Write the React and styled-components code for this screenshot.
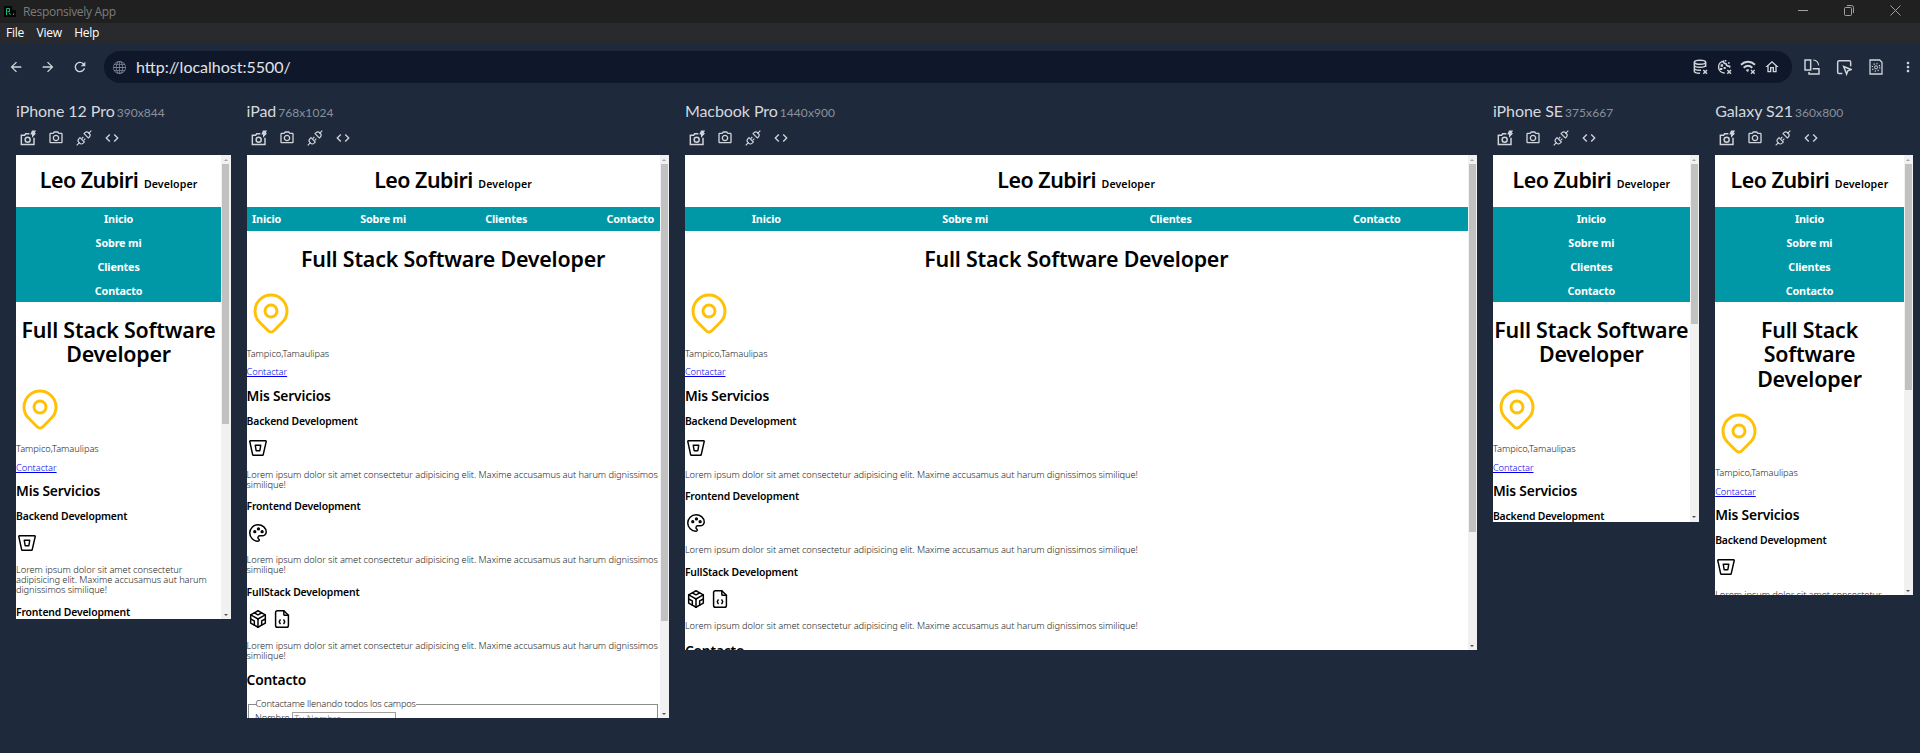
import React from 'react';
import styled, { createGlobalStyle } from 'styled-components';
import { TbBrandBitbucket, TbPalette, TbBrandCodesandbox, TbFileCode, TbMapPin } from 'react-icons/tb';
import { MdOutlinePhotoCamera, MdCode, MdArrowBack, MdArrowForward, MdRefresh, MdOutlineHome, MdMoreVert } from 'react-icons/md';
import { BsGlobe } from 'react-icons/bs';

const GlobalStyle = createGlobalStyle`
  * { box-sizing: border-box; }
  body { margin: 0; background: #1e293b; overflow: hidden; }
  h1, h2, h3, p, fieldset { margin: 0; padding: 0; }
`;

/* ---------- application shell ---------- */

const Window = styled.div`
  display: flex;
  flex-direction: column;
  height: 753px;
  overflow: hidden;
  background: #1e293b;
  color: #d5d8dd;
  font-family: Lato, sans-serif;
`;

const TitleBar = styled.header`
  display: flex;
  align-items: center;
  flex: none;
  height: 23px;
  padding: 0 19px 0 4px;
  background: #202020;
  color: #7c7c7c;
`;

const AppName = styled.span`
  flex: 1;
  margin-left: 7px;
  padding-top: 1px;
  font: 12px/18px "Open Sans", sans-serif;
  letter-spacing: -0.3px;
`;

const WindowControls = styled.div`
  display: flex;
  gap: 35px;
  padding-bottom: 3px;
  svg { display: block; }
`;

const MenuBar = styled.nav`
  display: flex;
  flex: none;
  gap: 12.5px;
  height: 20px;
  padding-left: 6px;
  background: #292a2d;
  color: #fff;
  font: 12px/20px "Open Sans", sans-serif;
  letter-spacing: -0.25px;
`;

const Toolbar = styled.div`
  display: flex;
  align-items: center;
  flex: none;
  height: 48px;
  padding: 0 4px 0 8px;
`;

const NavButtons = styled.div`
  display: flex;
  gap: 16px;
  padding-right: 16px;
`;

const IconButton = styled.span`
  display: flex;
  align-items: center;
  justify-content: center;
  width: 16px;
  height: 16px;
  color: #d1d5db;
`;

const AddressBar = styled.div`
  display: flex;
  align-items: center;
  flex: 1;
  height: 32px;
  padding: 0 12px 0 9px;
  border-radius: 16px;
  background: #0f172a;
`;

const Url = styled.span`
  flex: 1;
  margin-left: 10px;
  color: #e0e3e7;
  font-size: 16px;
  line-height: 24px;
`;

const AddressActions = styled.div`
  display: flex;
  gap: 8px;
`;

const ToolActions = styled.div`
  display: flex;
  gap: 16px;
  padding-left: 12px;
`;

/* ---------- device column ---------- */

const Devices = styled.main`
  display: flex;
  align-items: flex-start;
  gap: 16px;
  padding: 8px 16px 0;
`;

const Device = styled.section`
  flex: none;
  width: ${(p) => p.$w}px;
`;

const DeviceLabel = styled.div`
  height: 24px;
  font-size: 16px;
  line-height: 24px;
  letter-spacing: -0.06px;
  white-space: nowrap;
`;

const Dimensions = styled.span`
  margin-left: 2px;
  color: #8a919c;
  font-size: 12px;
  letter-spacing: 0.06px;
`;

const DeviceTools = styled.div`
  display: flex;
  align-items: center;
  gap: 12px;
  height: 32px;
  padding: 0 4px 2px;
`;

const Viewport = styled.div`
  display: flex;
  height: ${(p) => p.$h}px;
  overflow: hidden;
  background: #fff;
`;

const Scrollbar = styled.div`
  display: flex;
  flex-direction: column;
  flex: none;
  align-items: center;
  width: 9.35px;
  background: #f1f1f1;
`;

const Arrow = styled.span`
  display: flex;
  align-items: center;
  justify-content: center;
  flex: none;
  height: 9px;
  width: 9px;
  &::before {
    content: '';
    border: 2px solid transparent;
    border-top-width: 0;
    border-bottom-color: ${(p) => (p.$down ? '#505050' : '#a3a3a3')};
    transform: ${(p) => (p.$down ? 'rotate(180deg)' : 'none')};
  }
`;

const Thumb = styled.span`
  flex: none;
  width: 7.2px;
  height: ${(p) => p.$h}px;
  margin-bottom: auto;
  background: #c1c1c1;
`;

/* ---------- previewed site ---------- */

const Site = styled.article`
  flex: 1;
  min-width: 0;
  overflow: hidden;
  color: #000;
  font-family: "Noto Sans", sans-serif;
`;

const SiteHeader = styled.h1`
  display: flex;
  align-items: baseline;
  justify-content: center;
  gap: 5.5px;
  height: 52.25px;
  padding-top: 11px;
  font-size: 21.4px;
  font-weight: 600;
  line-height: 28px;
  letter-spacing: -0.5px;
  white-space: nowrap;
`;

const Role = styled.span`
  font-size: 10.6px;
  letter-spacing: 0.09px;
`;

const SiteNav = styled.nav`
  background: #0097a7;
`;

const NavList = styled.div`
  display: flex;
  flex-direction: ${(p) => (p.$stacked ? 'column' : 'row')};
  justify-content: space-between;
  align-items: center;
  max-width: 660px;
  margin: 0 auto;
`;

const NavLink = styled.a`
  height: 23.75px;
  padding: 0 5.5px;
  color: #fff;
  font-size: 10.8px;
  font-weight: 700;
  line-height: 24.4px;
  letter-spacing: -0.15px;
`;

const Hero = styled.h1`
  padding: 16px 0 18px;
  font-size: 21.4px;
  font-weight: 600;
  line-height: 24.2px;
  letter-spacing: -0.2px;
  text-align: center;
`;

const Pin = styled(TbMapPin)`
  display: block;
  color: #ffc107;
`;

const Copy = styled.p`
  margin: ${(p) => p.$m || '0'};
  color: #222;
  font-size: 9.3px;
  font-weight: 300;
  line-height: 9.9px;
  letter-spacing: -0.065px;
`;

const ContactLink = styled.a`
  color: #0000ee;
  text-decoration: underline;
`;

const Heading = styled.h2`
  margin: ${(p) => p.$top}px 0 ${(p) => p.$bottom || 0}px;
  font-size: 13.8px;
  font-weight: 600;
  line-height: 16px;
  letter-spacing: -0.17px;
`;

const Service = styled.section`
  padding-bottom: 10.5px;
`;

const ServiceTitle = styled.h3`
  margin-bottom: 10px;
  font-size: 10.4px;
  font-weight: 600;
  line-height: 12px;
  letter-spacing: -0.15px;
`;

const ServiceIcons = styled.div`
  display: flex;
  gap: 2px;
  height: 22px;
  margin-bottom: 11.2px;
`;

const Form = styled.fieldset`
  margin: 11px 1.5px 0;
  padding: 3px 6px 6px;
  min-width: 0;
  border: 1px solid #8c8c8c;
  color: #222;
  font-size: 9.3px;
  font-weight: 300;
  line-height: 10px;
`;

const Legend = styled.legend`
  padding: 0;
  margin-left: 0.5px;
  letter-spacing: -0.17px;
`;

const Field = styled.label`
  display: flex;
  align-items: flex-start;
  gap: 2px;
  line-height: 12px;
`;

const Input = styled.span`
  width: 104px;
  height: 13px;
  padding-left: 1.5px;
  border: 1px solid #a0a0a0;
  color: #757575;
  line-height: 11px;
`;

/* ---------- icons ---------- */

const Svg = ({ size = 16, children, ...rest }) => (
  <svg width={size} height={size} viewBox="0 0 24 24" fill="none" stroke="currentColor" strokeWidth="2" {...rest}>
    {children}
  </svg>
);

const AppLogo = () => (
  <svg width="12" height="11" viewBox="0 0 12 11">
    <path d="M0 0h8v4h4v7H0z" fill="#050505" />
    <path d="M2.500 9V2.500h3v3h-2M5 6.500l1.500 2.500" fill="none" stroke="#16b886" />
    <path d="M9 7.500h1v1.500H9z" fill="#16b886" />
  </svg>
);

const DatabaseX = () => (
  <Svg strokeWidth="2.200">
    <ellipse cx="12" cy="5" rx="8.500" ry="3" />
    <path d="M3.500 5v13.500c0 1.700 3.500 3 8.500 3M20.500 5v7M3.500 9.500c0 1.700 3.500 3 8.500 3s8.500-1.300 8.500-3M3.500 14c0 1.700 3.500 3 8.500 3h1.500M17 16.500l5.500 5.500M22.500 16.500L17 22" />
  </Svg>
);

const CookieX = () => (
  <Svg strokeWidth="2.200">
    <path d="M13 21A9 9 0 0 1 11 3.200c.2 2.500 1.500 3.800 4 3.800.2 2.600 2 4 5.500 4v2M17 16.500l5.500 5.500M22.500 16.500L17 22" />
    <path d="M8 9h1.500v1.500H8zM7 14.500h1.500v1H7zM12.500 13h1v1h-1z" />
    <path d="M13 2.500h2.500M18 6h2.500" />
  </Svg>
);

const WifiX = () => (
  <Svg strokeWidth="3">
    <path d="M1.500 8.500C7.500 2.800 16.500 2.800 22.500 8.500M5.500 13c4-3.400 9-3.400 13 0" />
    <path d="M8.500 16.500c1.500-1.200 3.500-1.400 5-.8L12 20z" fill="currentColor" stroke="none" />
    <path d="M16.500 16.500l5.500 5.500M22 16.500L16.500 22" strokeWidth="2" />
  </Svg>
);

const RotateDevice = () => (
  <Svg strokeWidth="2.200">
    <path d="M1.500 1.500h8.500v15H1.500zM13 14.500h9.500v8h-15v-3" />
    <path d="M14 1.500c4.500.5 7.500 3.500 8 8" strokeWidth="1.600" />
  </Svg>
);

const Inspect = () => (
  <Svg size={17} strokeWidth="2.200">
    <path d="M9.500 21H4.500a2 2 0 0 1-2-2V4a2 2 0 0 1 2-2H20a2 2 0 0 1 2 2v6" />
    <path d="M11.500 10.500l11 4.500-4.800 1.800-1.800 5z" />
  </Svg>
);

const PageTheme = () => (
  <Svg strokeWidth="1.900">
    <path d="M3 1.500h14.500L21 5v17.500H3z" />
    <circle cx="12" cy="12.500" r="2.300" strokeWidth="1.500" />
    <circle cx="12" cy="12.500" r="5.600" strokeDasharray="1.700 2.698" strokeWidth="2" />
  </Svg>
);

const CameraFlash = () => (
  <Svg size={17} strokeWidth="2.200">
    <path d="M14 5H8.500L7 7H2v14h19V11" />
    <circle cx="11.500" cy="13.800" r="3.800" />
    <path d="M18 0h6l-2 4h2.500l-6.500 7v-5h-2.500z" fill="currentColor" stroke="none" />
  </Svg>
);

const Plug = () => (
  <Svg strokeWidth="1.700">
    <path d="M1 23l4.500-4.500M23 1l-4.500 4.500" />
    <path d="M6 11.500l6.500 6.500-1.700 1.700a4 4 0 0 1-5.500 0l-1-1a4 4 0 0 1 0-5.500z" />
    <path d="M12 5.500L18.500 12l1.500-1.500a4 4 0 0 0 0-5.500l-1-1a4 4 0 0 0-5.500 0zM8.500 13l2.500-2.500M11.500 15.500L14 13" />
  </Svg>
);

const MinimizeIcon = () => (
  <svg width="11" height="11" stroke="#a0a0a0" fill="none">
    <path d="M0 5.500h10" />
  </svg>
);

const RestoreIcon = () => (
  <svg width="11" height="11" stroke="#a0a0a0" fill="none">
    <path d="M.5 3.500a1 1 0 0 1 1-1h5a1 1 0 0 1 1 1v6a1 1 0 0 1-1 1h-5a1 1 0 0 1-1-1zM3 .5h4.500a2 2 0 0 1 2 2V8" />
  </svg>
);

const CloseIcon = () => (
  <svg width="11" height="11" stroke="#a0a0a0" fill="none">
    <path d="M.5.5l10 10M10.500.5l-10 10" />
  </svg>
);

/* ---------- page ---------- */

const LOREM = 'Lorem ipsum dolor sit amet consectetur adipisicing elit. Maxime accusamus aut harum dignissimos similique!';
const LINKS = ['Inicio', 'Sobre mi', 'Clientes', 'Contacto'];

const SERVICES = [
  { title: 'Backend Development', icons: [TbBrandBitbucket] },
  { title: 'Frontend Development', icons: [TbPalette] },
  { title: 'FullStack Development', icons: [TbBrandCodesandbox, TbFileCode] },
];

/* `services` and `form` bound the part of the page each viewport reaches. */
const DEVICES = [
  { name: 'iPhone 12 Pro', w: 390, h: 844, thumb: 260, stacked: true, services: 2, bodies: 1 },
  { name: 'iPad', w: 768, h: 1024, thumb: 457, services: 3, bodies: 3, contact: true, form: true },
  { name: 'Macbook Pro', w: 1440, h: 900, thumb: 368, services: 3, bodies: 3, contact: true },
  { name: 'iPhone SE', w: 375, h: 667, thumb: 160, stacked: true, services: 1, bodies: 0 },
  { name: 'Galaxy S21', w: 360, h: 800, thumb: 226, stacked: true, services: 1, bodies: 1 },
];

const SCALE = 0.55;

function Portfolio({ device }) {
  return (
    <Site>
      <SiteHeader>
        Leo Zubiri <Role>Developer</Role>
      </SiteHeader>
      <SiteNav>
        <NavList $stacked={device.stacked}>
          {LINKS.map((l) => (
            <NavLink key={l}>{l}</NavLink>
          ))}
        </NavList>
      </SiteNav>
      <Hero>Full Stack Software Developer</Hero>
      <Pin size={48} strokeWidth={1.5} />
      <Copy $m="11.6px 0 8.6px">Tampico,Tamaulipas</Copy>
      <Copy>
        <ContactLink>Contactar</ContactLink>
      </Copy>
      <Heading $top={10.6} $bottom={10.9}>Mis Servicios</Heading>
      {SERVICES.slice(0, device.services).map((s, n) => (
        <Service key={s.title}>
          <ServiceTitle>{s.title}</ServiceTitle>
          {n < device.bodies && (
            <>
              <ServiceIcons>
                {s.icons.map((Icon, i) => (
                  <Icon key={i} size={22} strokeWidth={1.6} />
                ))}
              </ServiceIcons>
              <Copy>{LOREM}</Copy>
            </>
          )}
        </Service>
      ))}
      {device.contact && <Heading $top={1.2}>Contacto</Heading>}
      {device.form && (
        <Form>
          <Legend>Contactame llenando todos los campos</Legend>
          <Field>
            Nombre <Input>Tu Nombre</Input>
          </Field>
        </Form>
      )}
    </Site>
  );
}

export default function App() {
  return (
    <Window>
      <GlobalStyle />
      <TitleBar>
        <AppLogo />
        <AppName>Responsively App</AppName>
        <WindowControls>
          <MinimizeIcon />
          <RestoreIcon />
          <CloseIcon />
        </WindowControls>
      </TitleBar>
      <MenuBar>
        <span>File</span>
        <span>View</span>
        <span>Help</span>
      </MenuBar>
      <Toolbar>
        <NavButtons>
          <IconButton><MdArrowBack size={16} /></IconButton>
          <IconButton><MdArrowForward size={16} /></IconButton>
          <IconButton><MdRefresh size={16} /></IconButton>
        </NavButtons>
        <AddressBar>
          <BsGlobe size={13} color="#7b8392" />
          <Url>http://localhost:5500/</Url>
          <AddressActions>
            <IconButton><DatabaseX /></IconButton>
            <IconButton><CookieX /></IconButton>
            <IconButton><WifiX /></IconButton>
            <IconButton><MdOutlineHome size={16} /></IconButton>
          </AddressActions>
        </AddressBar>
        <ToolActions>
          <IconButton><RotateDevice /></IconButton>
          <IconButton><Inspect /></IconButton>
          <IconButton><PageTheme /></IconButton>
          <IconButton><MdMoreVert size={16} /></IconButton>
        </ToolActions>
      </Toolbar>
      <Devices>
        {DEVICES.map((d) => (
          <Device key={d.name} $w={d.w * SCALE}>
            <DeviceLabel>
              {d.name}
              <Dimensions>{d.w}x{d.h}</Dimensions>
            </DeviceLabel>
            <DeviceTools>
              <IconButton><CameraFlash /></IconButton>
              <IconButton><MdOutlinePhotoCamera size={16} /></IconButton>
              <IconButton><Plug /></IconButton>
              <IconButton><MdCode size={16} /></IconButton>
            </DeviceTools>
            <Viewport $h={d.h * SCALE}>
              <Portfolio device={d} />
              <Scrollbar>
                <Arrow />
                <Thumb $h={d.thumb} />
                <Arrow $down />
              </Scrollbar>
            </Viewport>
          </Device>
        ))}
      </Devices>
    </Window>
  );
}
